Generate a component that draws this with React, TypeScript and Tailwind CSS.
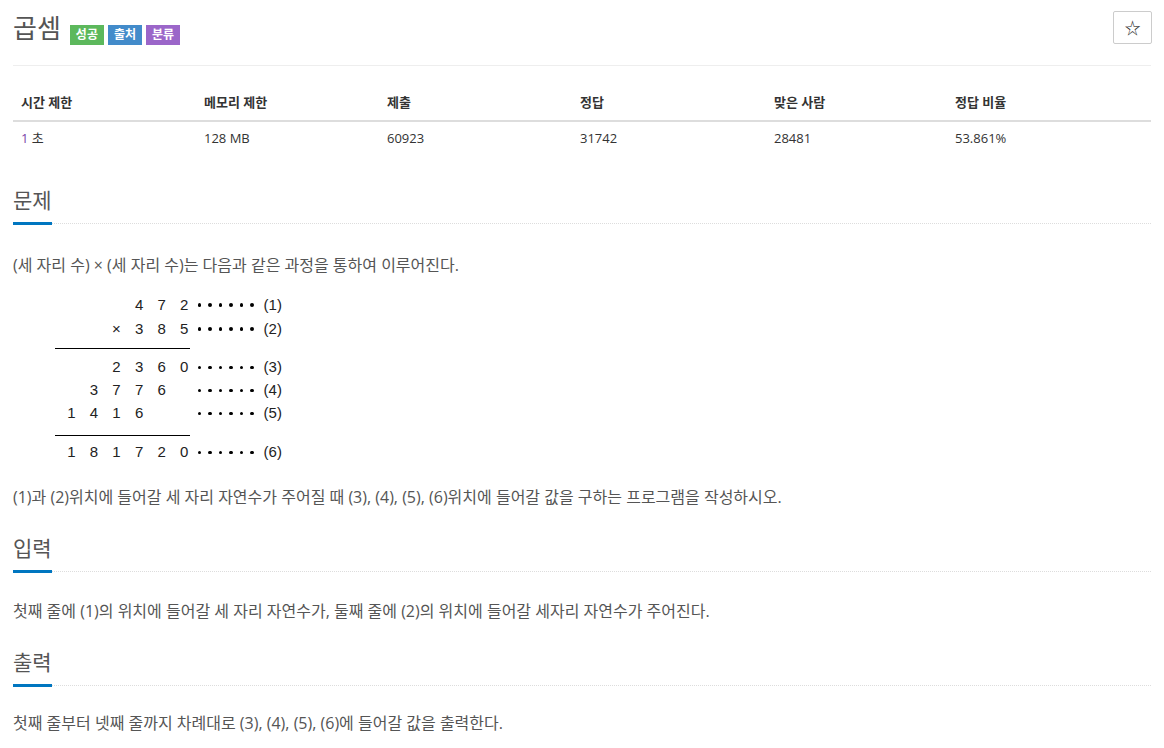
import React from 'react';

const font = { fontFamily: '"Open Sans", "Noto Sans CJK KR", sans-serif' };

const stats = [
  { label: '시간 제한', value: '1 초' },
  { label: '메모리 제한', value: '128 MB' },
  { label: '제출', value: '60923' },
  { label: '정답', value: '31742' },
  { label: '맞은 사람', value: '28481' },
  { label: '정답 비율', value: '53.861%' },
];

// rows of the multiplication picture: 6 digit columns + label
const rows: { cells: string[]; label: string }[] = [
  { cells: ['', '', '', '4', '7', '2'], label: '(1)' },
  { cells: ['', '', '×', '3', '8', '5'], label: '(2)' },
  { cells: ['', '', '2', '3', '6', '0'], label: '(3)' },
  { cells: ['', '3', '7', '7', '6', ''], label: '(4)' },
  { cells: ['1', '4', '1', '6', '', ''], label: '(5)' },
  { cells: ['1', '8', '1', '7', '2', '0'], label: '(6)' },
];

const Row = ({ cells, label, h = 'h-[23px]' }: { cells: string[]; label: string; h?: string }) => (
  <div className={`flex items-center ${h}`}>
    {cells.map((c, i) => (
      <span key={i} className="w-[22.6px] text-center">{c}</span>
    ))}
    <span className="flex gap-[7px] ml-[2px]">
      {[0, 1, 2, 3, 4, 5].map((d) => (
        <span key={d} className="w-[3.5px] h-[3.5px] rounded-full bg-black" />
      ))}
    </span>
    <span className="ml-[10px]">{label}</span>
  </div>
);

const Heading = ({ children, className = '' }: { children: React.ReactNode; className?: string }) => (
  <div className={`flex items-end ${className}`}>
    <span className="text-[21px] leading-[28px] text-[#555] pb-[8px] border-b-[3px] border-[#0076c0]">{children}</span>
    <div className="flex-1 border-b border-dotted border-[#ddd] mb-[1px]" />
  </div>
);

export default function App() {
  return (
    <div className="min-h-screen bg-white px-[13px] text-[#333]" style={font}>
      {/* 제목 */}
      <div className="flex items-start pt-[11px] pb-[20px] border-b border-[#eee]">
        <h1 className="text-[26px] leading-[34px] text-[#555] font-normal">곱셈</h1>
        <div className="flex gap-[4px] ml-[9px] mt-[14px]">
          <span className="h-[20px] px-[6px] flex items-center text-[12px] font-bold text-white bg-[#5cb85c]">성공</span>
          <span className="h-[20px] px-[6px] flex items-center text-[12px] font-bold text-white bg-[#428bca]">출처</span>
          <span className="h-[20px] px-[6px] flex items-center text-[12px] font-bold text-white bg-[#9b66c9]">분류</span>
        </div>
        <button className="ml-auto -mr-[1px] w-[39px] h-[33px] border border-[#ccc] rounded-[2px] flex items-center justify-center text-[16px] text-[#333]">
          ☆
        </button>
      </div>

      {/* 정보 표 */}
      <div className="mt-[18px] text-[13px]">
        <div className="grid grid-cols-[183px_183px_193px_194px_181px_1fr] border-b-2 border-[#ddd]">
          {stats.map((s) => (
            <div key={s.label} className="px-2 py-2 leading-[20px] font-bold text-[#333]">{s.label}</div>
          ))}
        </div>
        <div className="grid grid-cols-[183px_183px_193px_194px_181px_1fr]">
          {stats.map((s, i) => (
            <div key={s.label} className="px-2 py-[6px] leading-[20px] text-[#333]">
              {i === 0 ? (
                <>
                  <span className="text-[#7b3fa8]">1</span> 초
                </>
              ) : (
                s.value
              )}
            </div>
          ))}
        </div>
      </div>

      {/* 문제 */}
      <Heading className="mt-[32px]">문제</Heading>
      <p className="mt-[28px] text-[16px] leading-[24px] text-[#555]">
        (세 자리 수) × (세 자리 수)는 다음과 같은 과정을 통하여 이루어진다.
      </p>

      <div
        className="mt-[16px] ml-[47px] text-[15px] text-[#222]"
        style={{ fontFamily: '"Liberation Sans", "DejaVu Sans", sans-serif' }}
      >
        <Row {...rows[0]} h="h-[24px]" />
        <Row {...rows[1]} h="h-[24px]" />
        <div className="-ml-[5px] w-[135px] border-t border-black my-[7px]" />
        <Row {...rows[2]} />
        <Row {...rows[3]} />
        <Row {...rows[4]} />
        <div className="-ml-[5px] w-[135px] border-t border-black mt-[10px] mb-[5px]" />
        <Row {...rows[5]} />
      </div>

      <p className="mt-[21px] text-[16px] leading-[24px] text-[#555]">
        (1)과 (2)위치에 들어갈 세 자리 자연수가 주어질 때 (3), (4), (5), (6)위치에 들어갈 값을 구하는 프로그램을 작성하시오.
      </p>

      {/* 입력 */}
      <Heading className="mt-[25px]">입력</Heading>
      <p className="mt-[26px] text-[16px] leading-[24px] text-[#555]">
        첫째 줄에 (1)의 위치에 들어갈 세 자리 자연수가, 둘째 줄에 (2)의 위치에 들어갈 세자리 자연수가 주어진다.
      </p>

      {/* 출력 */}
      <Heading className="mt-[25px]">출력</Heading>
      <p className="mt-[24px] text-[16px] leading-[24px] text-[#555]">
        첫째 줄부터 넷째 줄까지 차례대로 (3), (4), (5), (6)에 들어갈 값을 출력한다.
      </p>
    </div>
  );
}
